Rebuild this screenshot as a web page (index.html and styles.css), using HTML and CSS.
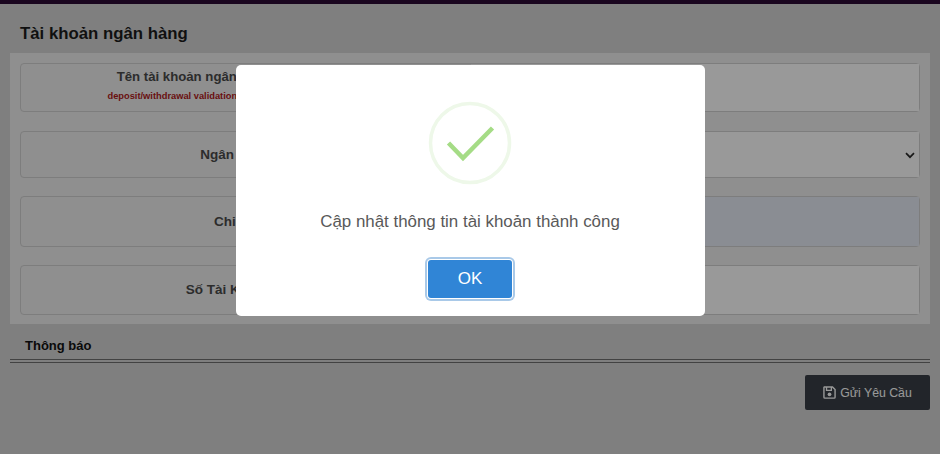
FILE: index.html
```html
<!DOCTYPE html>
<html lang="vi">

<head>
    <title>Tài khoản ngân hàng</title>
    <meta name="viewport" content="width=device-width, initial-scale=1" />
    <meta http-equiv="content-type" content="text/html; charset=utf-8" />
    <link rel="stylesheet" href="styles.css">
</head>

<body>
    <div class="topbar"></div>

    <div class="page">
        <h1 class="title">Tài khoản ngân hàng</h1>

        <div class="panel">
            <div class="row row-name">
                <div class="lbl">
                    <div class="lbl-txt">Tên tài khoản ngân hàng</div>
                    <div class="lbl-note">deposit/withdrawal validation name</div>
                </div>
                <div class="field"></div>
            </div>
            <div class="row row-bank">
                <div class="lbl"><div class="lbl-txt">Ngân hàng</div></div>
                <div class="field field-select">
                    <svg class="chevron" width="10" height="7" viewBox="0 0 10 7">
                        <path d="M1 1.2 L5 5.2 L9 1.2" fill="none" stroke="#2b2b2b" stroke-width="1.7" />
                    </svg>
                </div>
            </div>
            <div class="row row-branch">
                <div class="lbl"><div class="lbl-txt">Chi nhánh</div></div>
                <div class="field field-locked"></div>
            </div>
            <div class="row row-number">
                <div class="lbl"><div class="lbl-txt">Số Tài Khoản</div></div>
                <div class="field"></div>
            </div>
        </div>

        <div class="notice">Thông báo</div>

        <div class="actions">
            <button class="btn-send" type="button">
                <svg width="13" height="13" viewBox="0 0 14 14">
                    <path d="M1.5 1 H10.2 L13 3.8 V12 A1 1 0 0 1 12 13 H2 A1 1 0 0 1 1 12 V1.5 Z" fill="none" stroke="#ffffff" stroke-width="1.5" />
                    <path d="M3.8 1.2 V4.8 H9 V1.2" fill="none" stroke="#ffffff" stroke-width="1.4" />
                    <circle cx="7" cy="9" r="2" fill="#ffffff" />
                </svg>
                Gửi Yêu Cầu
            </button>
        </div>
    </div>

    <!-- success popup -->
    <div class="overlay">
        <div class="modal">
            <svg class="ok-icon" width="84" height="84" viewBox="0 0 84 84">
                <circle cx="42" cy="42" r="39.5" fill="none" stroke="#eef8e9" stroke-width="3.5" />
                <path d="M20.5 42 L35 57 L64.5 27" fill="none" stroke="#a5dc86" stroke-width="4.5" />
            </svg>
            <div class="modal-txt">Cập nhật thông tin tài khoản thành công</div>
            <button class="btn-ok" type="button">OK</button>
        </div>
    </div>
</body>

</html>
```

FILE: styles.css
```css
* {
    box-sizing: border-box;
}

html,
body {
    height: 100%;
}

body {
    margin: 0;
    overflow: hidden;
    font-family: "Liberation Sans", Arial, sans-serif;
    background-color: #d4d4d4;
}

.topbar {
    height: 4px;
    background-color: #2c0a35;
}

.page {
    padding: 0 10px;
}

.title {
    margin: 0;
    padding: 19px 0 0 10px;
    height: 49px;
    font-size: 16.8px;
    line-height: 21px;
    font-weight: bold;
    color: #1c1c1c;
}

.panel {
    height: 271px;
    padding: 10px;
    background-color: #eeeeee;
}

.row {
    display: flex;
    border: 1px solid #d0d0d0;
    border-radius: 4px;
}

.row-name {
    height: 49px;
    margin-bottom: 19px;
}

.row-bank {
    height: 47px;
    margin-bottom: 18px;
}

.row-branch {
    height: 51px;
    margin-bottom: 18px;
}

.row-number {
    height: 50px;
}

.lbl {
    width: 450px;
    padding-right: 199px;
    display: flex;
    flex-direction: column;
    justify-content: center;
    text-align: right;
    white-space: nowrap;
}

.lbl-txt {
    font-size: 13.5px;
    line-height: 18px;
    font-weight: bold;
    color: #4a4a4a;
}

.lbl-note {
    padding-right: 8px;
    margin-top: 4px;
    font-size: 9.3px;
    line-height: 12px;
    font-weight: bold;
    color: #b01a1a;
}

.row-name .lbl {
    justify-content: flex-start;
    padding-top: 4px;
}

.row-name .lbl-txt {
    font-size: 13.2px;
}

.row-bank .lbl {
    padding-right: 201px;
}

.row-branch .lbl {
    padding-right: 191px;
}

.field {
    flex: 1;
    background-color: #ffffff;
}

.field-select {
    display: flex;
    align-items: center;
    justify-content: flex-end;
    padding-top: 1px;
    padding-right: 4px;
}

.field-locked {
    background-color: #e6ebf5;
}

.notice {
    height: 39px;
    padding: 14px 0 0 15px;
    border-bottom: 4px double #6e6e6e;
    font-size: 13px;
    line-height: 15px;
    font-weight: bold;
    color: #111111;
}

.actions {
    display: flex;
    justify-content: flex-end;
    margin-top: 12px;
}

.btn-send {
    display: flex;
    align-items: center;
    justify-content: center;
    gap: 4px;
    width: 125px;
    height: 35px;
    border: none;
    border-radius: 2px;
    background-color: #3a3f47;
    color: #ffffff;
    font-family: "Liberation Sans", Arial, sans-serif;
    font-size: 12.3px;
}

.overlay {
    position: fixed;
    top: 0;
    left: 0;
    right: 0;
    bottom: 0;
    display: flex;
    justify-content: center;
    align-items: flex-start;
    padding-top: 65px;
    background-color: rgba(0, 0, 0, 0.4);
}

.modal {
    display: flex;
    flex-direction: column;
    align-items: center;
    width: 469px;
    height: 251px;
    padding-top: 36px;
    border-radius: 5px;
    background-color: #ffffff;
}

.modal-txt {
    margin-top: 25px;
    font-size: 16.9px;
    line-height: 24px;
    color: #595959;
}

.btn-ok {
    width: 84px;
    height: 38px;
    margin-top: 26px;
    border: none;
    border-radius: 3px;
    background-color: #3085d6;
    color: #ffffff;
    font-family: "Liberation Sans", Arial, sans-serif;
    font-size: 17px;
    box-shadow: 0 0 0 1px #ffffff, 0 0 0 3px #a9c9e8;
}
```
